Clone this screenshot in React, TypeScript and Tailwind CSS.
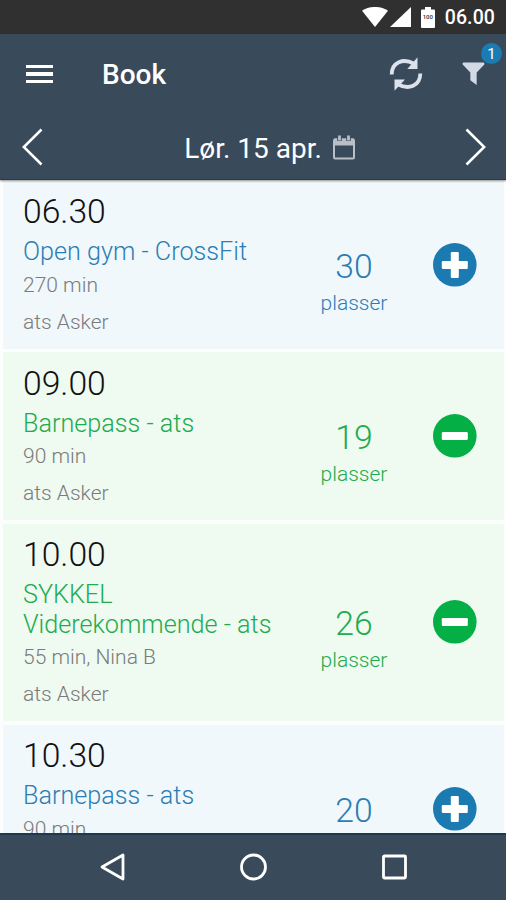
type Session = {
  time: string;
  name: string;
  details: string;
  place: string;
  spots: number;
  booked: boolean;
};

const sessions: Session[] = [
  { time: "06.30", name: "Open gym - CrossFit", details: "270 min", place: "ats Asker", spots: 30, booked: false },
  { time: "09.00", name: "Barnepass - ats", details: "90 min", place: "ats Asker", spots: 19, booked: true },
  { time: "10.00", name: "SYKKEL Viderekommende - ats", details: "55 min, Nina B", place: "ats Asker", spots: 26, booked: true },
  { time: "10.30", name: "Barnepass - ats", details: "90 min", place: "ats Asker", spots: 20, booked: false },
];

function StatusBar() {
  return (
    <div className="flex h-[34px] shrink-0 items-center justify-end bg-[#303030] pr-[11px] text-white">
      <svg width="26" height="20" viewBox="0 0 26 20" fill="currentColor" aria-hidden>
        <path d="M0 3.8C7-1.3 19-1.3 26 3.8L13 20Z" />
      </svg>
      <svg className="ml-[2px]" width="21" height="20" viewBox="0 0 21 20" fill="currentColor" aria-hidden>
        <path d="M21 0V20H0Z" />
      </svg>
      <div className="relative ml-[10px] flex h-[21px] w-[14px] items-center justify-center">
        <svg className="absolute inset-0" width="14" height="21" viewBox="0 0 14 21" fill="currentColor" aria-hidden>
          <path d="M4 0h6v2.5h3a1 1 0 0 1 1 1V20a1 1 0 0 1-1 1H1a1 1 0 0 1-1-1V3.5a1 1 0 0 1 1-1h3Z" />
        </svg>
        <span className="relative text-[6px] leading-none font-medium text-[#303030]">100</span>
      </div>
      <span className="ml-[10px] pt-[2px] text-[19.5px] leading-none font-medium tracking-[0.1px]">06.00</span>
    </div>
  );
}

function Header() {
  return (
    <header className="relative z-10 h-[146px] shrink-0 border-b border-[#223a52] bg-[#394a5a] text-white shadow-[0_1px_2px_rgba(0,0,0,0.45)]">
      <div className="flex h-20 items-center pr-[21px] pl-[26px]">
        <button type="button" aria-label="Meny" className="flex w-[27px] flex-col gap-[4px]">
          <span className="h-[3.5px] bg-white" />
          <span className="h-[3.5px] bg-white" />
          <span className="h-[3.5px] bg-white" />
        </button>
        <h1 className="ml-[49px] pt-[2px] text-[28px] leading-none font-medium">Book</h1>
        <button type="button" aria-label="Oppdater" className="ml-auto">
          <svg width="34" height="34" viewBox="0 0 34 34" fill="none" aria-hidden>
            <path d="M2.7 17.5C2.7 5 14.5 1 24.5 6.5" stroke="#dbe2ec" strokeWidth="3.8" />
            <path d="M28.5 .3V12H18.3Z" fill="#dbe2ec" />
            <path d="M31.3 16.5C31.3 29 19.5 33 9.5 27.5" stroke="#dbe2ec" strokeWidth="3.8" />
            <path d="M5.5 33.7V22.5H16Z" fill="#dbe2ec" />
          </svg>
        </button>
        <button type="button" aria-label="Filter" className="relative ml-[39px]">
          <svg className="block" width="23" height="24" viewBox="0 0 24 24" fill="#d3dae6" aria-hidden>
            <path d="M1.5 0H22.5Q24 .5 23.3 2L15.3 10.5V23.5L8.7 18.5V10.5L.7 2Q0 .5 1.5 0Z" />
          </svg>
          <span className="absolute -top-[19px] left-[19px] flex size-[21px] items-center justify-center rounded-full bg-[#1b7cb3] pt-[1px] text-[15px] leading-none">
            1
          </span>
        </button>
      </div>
      <div className="flex h-[66px] items-center justify-between pr-[20px] pl-[22px]">
        <button type="button" aria-label="Forrige dag">
          <svg width="21" height="38" viewBox="0 0 21 38" fill="none" stroke="white" strokeWidth="2.6" aria-hidden>
            <path d="M19.5 1.5 1.8 19 19.5 36.5" />
          </svg>
        </button>
        <div className="flex items-center gap-[11px] pl-[31px] text-[28px] leading-none">
          <span className="pt-[3px]">Lør. 15 apr.</span>
          <svg width="22" height="25" viewBox="0 0 22 25" fill="none" aria-hidden>
            <rect x="1" y="4.5" width="20" height="19" rx="1" stroke="#b8bfc5" strokeWidth="2" />
            <path d="M1 3.5h20v7H1Z" fill="#b8bfc5" />
            <path d="M6.5 1v5M15.5 1v5" stroke="#394a5a" strokeWidth="4.4" />
            <path d="M6.5 .5v5M15.5 .5v5" stroke="#b8bfc5" strokeWidth="2.8" />
          </svg>
        </div>
        <button type="button" aria-label="Neste dag">
          <svg width="21" height="38" viewBox="0 0 21 38" fill="none" stroke="white" strokeWidth="2.6" aria-hidden>
            <path d="M1.5 1.5 19.2 19 1.5 36.5" />
          </svg>
        </button>
      </div>
    </header>
  );
}

function SessionRow({ session }: { session: Session }) {
  const { time, name, details, place, spots, booked } = session;
  const accent = booked ? "text-[#22ab4e]" : "text-[#2d7db3]";

  return (
    <li
      className={`flex shrink-0 items-center pr-[27px] pl-[20px] font-light ${
        booked ? "bg-[#effaf0]" : "bg-[#f0f8fc]"
      }`}
    >
      <div className="w-[264px] pt-[11.5px] pb-[13.7px]">
        <p className="text-[33.7px] leading-[40px] text-[#111]">{time}</p>
        <h2 className={`mt-[5px] text-[25.2px] leading-[29.7px] ${accent}`}>{name}</h2>
        <p className="mt-[6px] text-[21px] leading-[25px] text-[#7b7b7b]">{details}</p>
        <p className="mt-[12px] text-[21px] leading-[25px] text-[#7b7b7b]">{place}</p>
      </div>
      <div className={`ml-[17px] w-[100px] pt-[33px] text-center ${accent}`}>
        <p className="text-[33.7px] leading-[40px]">{spots}</p>
        <p className="mt-[4px] text-[21px] leading-[25px]">plasser</p>
      </div>
      <button type="button" aria-label={booked ? "Meld av" : "Meld på"} className="ml-auto">
        <svg className="block" width="44" height="44" viewBox="0 0 44 44" aria-hidden>
          <circle cx="21.8" cy="21.8" r="21.8" fill={booked ? "#04b046" : "#1b7bb1"} />
          <rect x="8.8" y="18" width="26" height="8" rx="1.2" fill="white" />
          {!booked && <rect x="17.8" y="9" width="8" height="26" rx="1.2" fill="white" />}
        </svg>
      </button>
    </li>
  );
}

function NavigationBar() {
  return (
    <nav className="relative z-10 flex h-[67px] shrink-0 items-center justify-center gap-[114px] border-t-2 border-[#1e3850] bg-[#394a5a] pb-[2px]">
      <svg width="26" height="28" viewBox="0 0 26 28" fill="none" stroke="white" strokeWidth="2.8" strokeLinejoin="round" aria-hidden>
        <path d="M24 2v24L3 14Z" />
      </svg>
      <svg width="28" height="28" viewBox="0 0 28 28" fill="none" stroke="white" strokeWidth="2.8" aria-hidden>
        <circle cx="14.5" cy="14" r="12" />
      </svg>
      <svg width="26" height="26" viewBox="0 0 26 26" fill="none" stroke="white" strokeWidth="2.8" aria-hidden>
        <rect x="2.5" y="2" width="22" height="22" rx="1" />
      </svg>
    </nav>
  );
}

export default function App() {
  return (
    <div className="flex h-[900px] w-[506px] flex-col overflow-hidden bg-[#fcfefd] font-[Roboto,sans-serif]">
      <StatusBar />
      <Header />
      <ul className="flex min-h-0 flex-1 flex-col gap-[3.5px] overflow-hidden pt-[0.8px] pr-[2px] pl-[3px]">
        {sessions.map((session) => (
          <SessionRow key={session.time} session={session} />
        ))}
      </ul>
      <NavigationBar />
    </div>
  );
}
